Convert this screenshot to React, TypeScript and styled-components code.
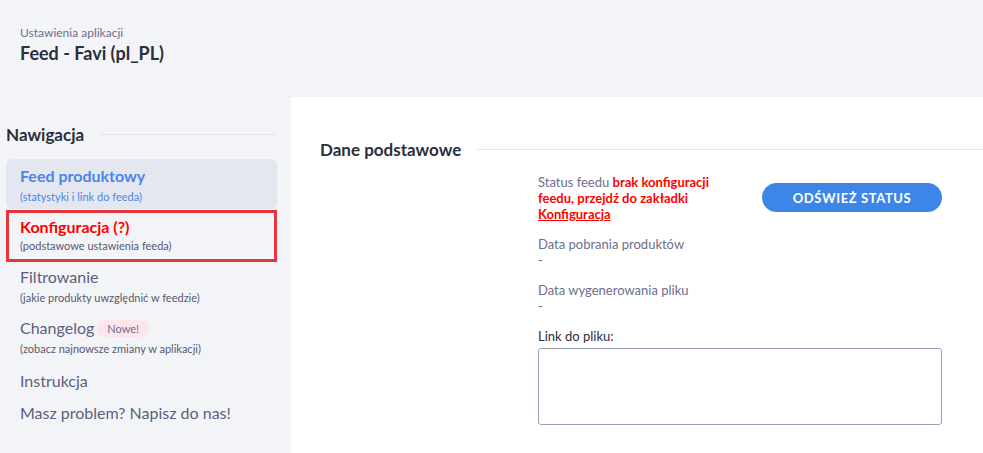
import React from 'react';
import styled, {createGlobalStyle} from 'styled-components';

const COLORS = {
    BG: '#f3f4f8',
    TEXT: '#2b2e3b',
    MUTED: '#6c6f8c',
    BLUE: '#4a86e8',
    RED: '#ff0000',
    FRAME: '#e5353d',
    LINE: '#e3e5ec',
};

const GlobalStyle = createGlobalStyle`
    html, body {
        margin: 0;
        padding: 0;
        background: ${COLORS.BG};
        font-family: Lato, "Liberation Sans", sans-serif;
        color: ${COLORS.TEXT};
    }
    * {
        box-sizing: border-box;
    }
`

const navItems = [
    {title: 'Feed produktowy', sub: '(statystyki i link do feeda)', state: 'active'},
    {title: 'Konfiguracja (?)', sub: '(podstawowe ustawienia feeda)', state: 'error'},
    {title: 'Filtrowanie', sub: '(jakie produkty uwzględnić w feedzie)'},
    {title: 'Changelog', sub: '(zobacz najnowsze zmiany w aplikacji)', badge: 'Nowe!'},
    {title: 'Instrukcja'},
    {title: 'Masz problem? Napisz do nas!'},
];

function App() {
    return (
        <Page>
            <GlobalStyle/>
            <Header>
                <HeaderSmall>Ustawienia aplikacji</HeaderSmall>
                <HeaderTitle>Feed - Favi (pl_PL)</HeaderTitle>
            </Header>
            <Body>
                <Sidebar>
                    <SectionHead>
                        <SectionTitle>Nawigacja</SectionTitle>
                        <SectionLine/>
                    </SectionHead>
                    <NavList>
                        {navItems.map((item) => (
                            <NavItem key={item.title} $state={item.state} $hasSub={!!item.sub} $hasBadge={!!item.badge}>
                                <NavTitle $state={item.state}>
                                    {item.title}
                                    {item.badge && <Badge>{item.badge}</Badge>}
                                </NavTitle>
                                {item.sub && <NavSub $state={item.state}>{item.sub}</NavSub>}
                            </NavItem>
                        ))}
                    </NavList>
                </Sidebar>
                <Content>
                    <SectionHead>
                        <SectionTitle>Dane podstawowe</SectionTitle>
                        <SectionLine/>
                    </SectionHead>
                    <Details>
                        <StatusRow>
                            <StatusText>
                                Status feedu <ErrorText>brak konfiguracji feedu, przejdź do zakładki <ErrorLink>Konfiguracja</ErrorLink></ErrorText>
                            </StatusText>
                            <RefreshButton>Odśwież status</RefreshButton>
                        </StatusRow>
                        <Field>
                            <FieldLabel>Data pobrania produktów</FieldLabel>
                            <FieldValue>-</FieldValue>
                        </Field>
                        <Field>
                            <FieldLabel>Data wygenerowania pliku</FieldLabel>
                            <FieldValue>-</FieldValue>
                        </Field>
                        <LinkLabel>Link do pliku:</LinkLabel>
                        <LinkBox/>
                    </Details>
                </Content>
            </Body>
        </Page>
    );
}

const Page = styled.div`
    min-height: 100vh;
    display: flex;
    flex-direction: column;
`
const Header = styled.div`
    height: 97px;
    padding: 25px 20px 0 20px;
`
const HeaderSmall = styled.div`
    font-size: 12px;
    color: ${COLORS.MUTED};
`
const HeaderTitle = styled.div`
    font-size: 18px;
    font-weight: 700;
    margin-top: 2px;
`
const Body = styled.div`
    flex: 1;
    display: flex;
`
const Sidebar = styled.div`
    width: 291px;
    flex-shrink: 0;
    padding: 27px 14px 0 6px;
`
const SectionHead = styled.div`
    display: flex;
    align-items: center;
    gap: 16px;
`
const SectionTitle = styled.div`
    font-size: 17px;
    font-weight: 700;
    white-space: nowrap;
`
const SectionLine = styled.div`
    flex: 1;
    height: 1px;
    background: ${COLORS.LINE};
`
const NavList = styled.div`
    display: flex;
    flex-direction: column;
    margin-top: 14px;
`
const NavItem = styled.div<{$state?: string; $hasSub: boolean; $hasBadge: boolean}>`
    border-radius: 6px;
    padding: 4px 14px ${p => p.$hasSub ? (p.$hasBadge ? '9px' : '7px') : '6px'} 14px;
    ${p => p.$state === 'active' && `
        background: #e4e7f0;
        padding-top: 6px;
        padding-bottom: 4px;
        margin-bottom: 1px;
    `}
    ${p => p.$state === 'error' && `
        border: 3px solid ${COLORS.FRAME};
        border-radius: 0;
        padding: 3px 11px 5px 11px;
    `}
`
const NavTitle = styled.div<{$state?: string}>`
    display: flex;
    align-items: center;
    font-size: 16px;
    line-height: 22px;
    font-weight: ${p => p.$state ? 700 : 400};
    color: ${p => p.$state === 'active' ? COLORS.BLUE : p.$state === 'error' ? COLORS.RED : '#5b5f7c'};
`
const NavSub = styled.div<{$state?: string}>`
    font-size: 11px;
    line-height: 16px;
    margin-top: ${p => p.$state === 'error' ? '0' : '2px'};
    color: ${p => p.$state === 'active' ? COLORS.BLUE : '#555970'};
`
const Badge = styled.span`
    margin-left: 3px;
    padding: 2px 10px;
    border-radius: 10px;
    background: #fde6ea;
    color: #6c6f8c;
    font-size: 11px;
    line-height: 13px;
    font-weight: 400;
`
const Content = styled.div`
    flex: 1;
    background: #fff;
    padding: 42px 0 0 29px;
`
const Details = styled.div`
    width: 404px;
    margin-left: 218px;
    margin-top: 14px;
    display: flex;
    flex-direction: column;
`
const StatusRow = styled.div`
    display: flex;
    align-items: flex-start;
    justify-content: space-between;
`
const StatusText = styled.div`
    width: 190px;
    font-size: 13px;
    line-height: 16px;
    color: ${COLORS.MUTED};
`
const ErrorText = styled.span`
    color: ${COLORS.RED};
    font-weight: 700;
`
const ErrorLink = styled.span`
    text-decoration: underline;
`
const RefreshButton = styled.button`
    margin-top: 9px;
    width: 180px;
    height: 29px;
    border: 0;
    border-radius: 15px;
    background: #3d86e7;
    color: #fff;
    font-family: inherit;
    font-size: 13px;
    font-weight: 700;
    letter-spacing: 0.6px;
    text-transform: uppercase;
`
const Field = styled.div`
    margin-top: 14px;
    font-size: 13px;
    line-height: 16px;
`
const FieldLabel = styled.div`
    color: ${COLORS.MUTED};
`
const FieldValue = styled.div`
    color: ${COLORS.MUTED};
`
const LinkLabel = styled.div`
    margin-top: 14px;
    font-size: 13px;
    line-height: 16px;
    color: ${COLORS.TEXT};
`
const LinkBox = styled.div`
    margin-top: 4px;
    height: 77px;
    border: 1px solid #9da2b8;
    border-radius: 3px;
`

export default App;
